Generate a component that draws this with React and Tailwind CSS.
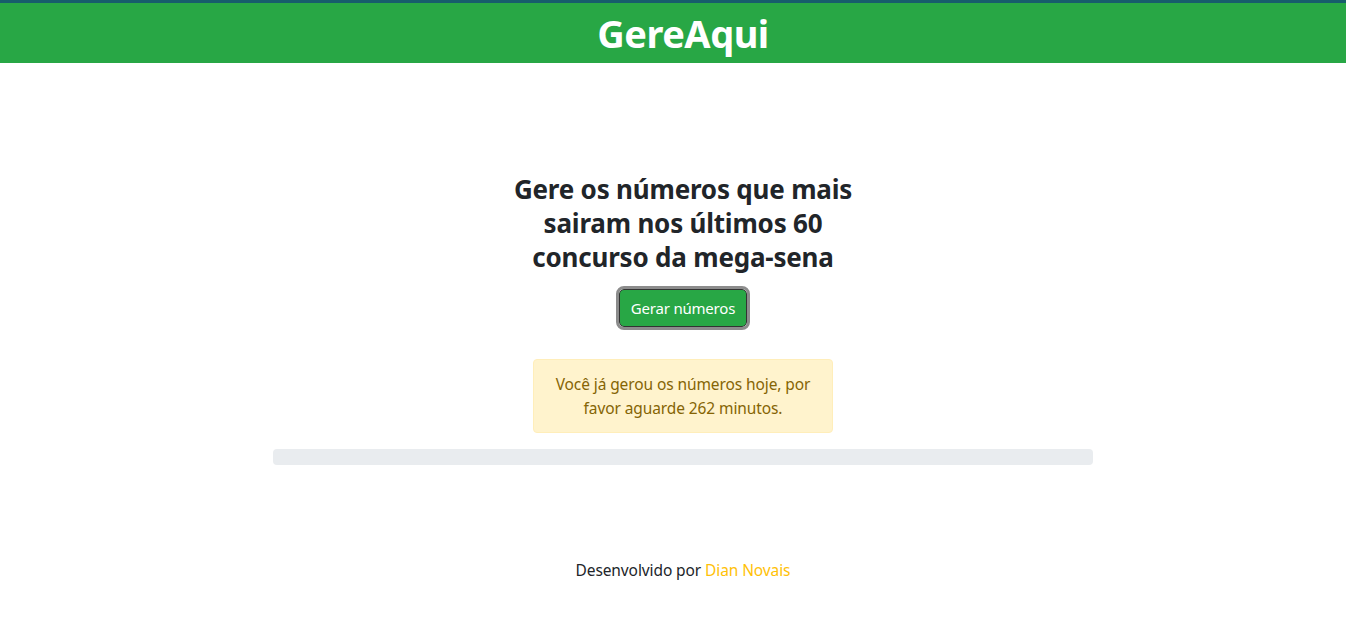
import React from 'react';

export default function App() {
  return (
    <div className="min-h-screen bg-white text-[#212529] font-['Noto_Sans',sans-serif] pl-5">
      {/* Header */}
      <header className="border-t-[3px] border-[#175d6c] bg-[#28a745] h-[63px] flex items-center justify-center -ml-5 pl-5">
        <h1 className="text-white text-[38px] font-bold leading-none tracking-[-0.5px]">GereAqui</h1>
      </header>

      <main className="flex flex-col items-center pt-[109px]">
        <h2 className="w-[350px] text-center text-[26px] font-bold leading-[34px] tracking-[-0.2px]">
          Gere os números que mais sairam nos últimos 60 concurso da mega-sena
        </h2>

        <button className="mt-[15px] h-[38px] px-[11px] rounded-[5px] bg-[#28a745] text-white text-[15px] border border-[#333] outline-[3px] outline-solid outline-[#8c8c8c] tracking-[-0.2px]">
          Gerar números
        </button>

        <div className="mt-[32px] w-[300px] rounded-[4px] border border-[#ffeeba] bg-[#fff3cd] px-5 py-[12px] text-center text-[#856404] text-[15.5px] leading-[24px] tracking-[-0.1px]">
          Você já gerou os números hoje, por favor aguarde 262 minutos.
        </div>

        <div className="mt-[16px] w-[820px] h-[16px] rounded-[4px] bg-[#e9ecef]" />

        <footer className="mt-[94px] text-[15.5px] tracking-[-0.1px]">
          Desenvolvido por <a className="text-[#ffc107]">Dian Novais</a>
        </footer>
      </main>
    </div>
  );
}
